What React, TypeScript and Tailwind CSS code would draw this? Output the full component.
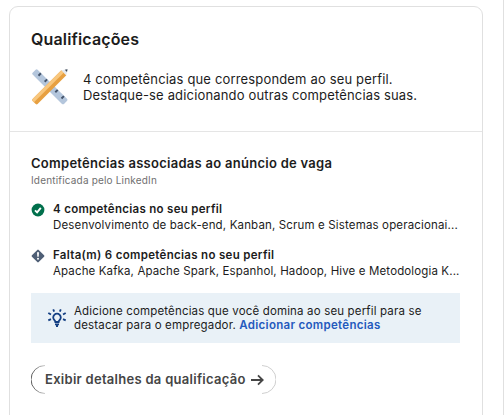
import type { ReactNode } from "react";

function PencilRuler() {
  return (
    <svg width="36" height="36" viewBox="0 0 36 36" className="shrink-0">
      <path d="M.6 5.600Q-.2 4.600.6 3.700L3.600.7Q4.600-.1 5.600.7L35 29.800Q35.900 30.800 35.100 31.700L32 34.900Q31 35.700 30 34.900z" fill="#b4c6dc" />
      <path d="M6.500 6.700l2.400-2.400M12.700 12.800l2.400-2.400M23.300 23.300l2.400-2.400M29.500 29.500l2.400-2.400" stroke="#44546b" strokeWidth="2" />
      <path d="M.6 30L29.300 1.300l5 5L5.600 35Q4.600 35.800 3.700 35L.6 31.900Q-.2 31 .6 30z" fill="#e7a041" />
      <path d="M.6 30L29.300 1.300l2.400 2.400L2 33.300l-1.400-1.400Q-.2 31 .6 30z" fill="#f8c77e" />
      <path d="M29.300 1.300L35.500.2 34.300 6.300z" fill="#e3e9f1" />
      <path d="M32.800.7l2.700-.5L35 2.900z" fill="#38434f" />
    </svg>
  );
}

function CheckIcon() {
  return (
    <svg width="14" height="14" viewBox="0 0 14 14">
      <circle cx="7" cy="7" r="6.400" fill="#01704c" />
      <path d="M4 7.300l2.100 2.100L9.800 4.800" fill="none" stroke="#fff" strokeWidth="1.900" />
    </svg>
  );
}

function MissingIcon() {
  return (
    <svg width="14" height="14" viewBox="0 0 14 14">
      <rect x="2.200" y="2.200" width="9.600" height="9.600" rx="1" fill="#4f5f76" transform="rotate(45 7 7)" />
      <path d="M6 3.200h2L7.700 7.800H6.300z" fill="#fff" />
      <circle cx="7" cy="9.700" r="1" fill="#fff" />
    </svg>
  );
}

function BulbIcon() {
  return (
    <svg width="20" height="20" viewBox="0 0 20 20" fill="none" stroke="#143f83" strokeWidth="1.800" className="shrink-0">
      <path d="M8.400 14c0-1.600-2.200-2.300-2.200-4.500a3.800 3.800 0 0 1 7.600 0c0 2.200-2.200 2.900-2.200 4.500z" />
      <path d="M8 16.400h4M9 18h2M7.200 3.700L6.200 1.300M12.800 3.700l1-2.400M4 6.500L1.300 4.900M16 6.500l2.700-1.600M4 11.100l-2.700 1.300M16 11.100l2.700 1.300" />
    </svg>
  );
}

function ButtonOutline() {
  return (
    <svg width="245" height="29" viewBox="0 0 245 29" fill="none" className="absolute inset-0">
      <path d="M14 .5A14 14 0 0 0 14 28.500" stroke="url(#edgeLeft)" />
      <path d="M231 .5A14 14 0 0 1 231 28.500" stroke="#cfcfcf" />
      <defs>
        <linearGradient id="edgeLeft" x1="0" y1="0" x2="14" y2="0" gradientUnits="userSpaceOnUse">
          <stop offset="0" stopColor="#555" />
          <stop offset="1" stopColor="#ccc" />
        </linearGradient>
      </defs>
    </svg>
  );
}

function SkillGroup({ icon, title, titleClass, skills, skillsClass }: { icon: ReactNode; title: string; titleClass: string; skills: string; skillsClass: string }) {
  return (
    <li className="flex gap-2">
      <span className="mt-[2px] shrink-0">{icon}</span>
      <div className="text-[11.5px] leading-4 whitespace-nowrap">
        <p className={`font-semibold ${titleClass}`}>{title}</p>
        <p className={skillsClass}>{skills}</p>
      </div>
    </li>
  );
}

export default function App() {
  return (
    <div className="flex h-[415px] w-[504px] justify-between overflow-hidden border-r border-[#e0e0e0] bg-white pt-[6px] pl-[9px] font-['Inter',sans-serif] text-[#1c1c1c]">
      <section className="h-[440px] w-[474px] shrink-0 rounded-[9px] border border-[#e0e0e0]">
        <header className="h-[125px] border-b border-[#e5e5e5] px-[21px] pt-[22px]">
          <h1 className="text-[16px] leading-5 font-semibold tracking-[0.15px]">Qualificações</h1>
          <div className="mt-[20px] flex items-center gap-[15px] pl-[1px]">
            <PencilRuler />
            <p className="text-[13px] leading-4 tracking-[0.16px] whitespace-nowrap">
              <span className="block">4 competências que correspondem ao seu perfil.</span>
              <span className="block">Destaque-se adicionando outras competências suas.</span>
            </p>
          </div>
        </header>
        <div className="px-[21px] pt-[23px]">
          <h2 className="text-[13px] leading-4 font-semibold tracking-[0.27px]">Competências associadas ao anúncio de vaga</h2>
          <p className="mt-[2px] text-[10px] leading-[14px] tracking-[0.18px] text-[#6f6f6f]">Identificada pelo LinkedIn</p>
          <ul className="mt-[14px] flex flex-col gap-[14px]">
            <SkillGroup
              icon={<CheckIcon />}
              title="4 competências no seu perfil"
              titleClass="tracking-[0.29px]"
              skills="Desenvolvimento de back-end, Kanban, Scrum e Sistemas operacionai..."
              skillsClass="tracking-[0.15px]"
            />
            <SkillGroup
              icon={<MissingIcon />}
              title="Falta(m) 6 competências no seu perfil"
              titleClass="tracking-[0.31px]"
              skills="Apache Kafka, Apache Spark, Espanhol, Hadoop, Hive e Metodologia K..."
              skillsClass="tracking-[0.13px]"
            />
          </ul>
          <aside className="mt-[14px] flex h-[50px] w-[429px] items-center gap-[7px] bg-[#e9f1f7] pl-[16px]">
            <BulbIcon />
            <p className="text-[11.5px] leading-[14px] tracking-[0.16px] whitespace-nowrap">
              <span className="block">Adicione competências que você domina ao seu perfil para se</span>
              <span className="block">
                destacar para o empregador. <a className="font-semibold tracking-[0.3px] text-[#2459bd]">Adicionar competências</a>
              </span>
            </p>
          </aside>
          <button className="relative mt-[22px] flex h-[29px] w-[245px] items-center gap-[5px] rounded-full pl-[14px] text-[13px] font-semibold tracking-[0.28px] whitespace-nowrap text-[#454545]">
            <ButtonOutline />
            <span>Exibir detalhes da qualificação</span>
            <svg width="13" height="12" viewBox="0 0 13 12" fill="none" stroke="currentColor" strokeWidth="1.800">
              <path d="M0 6h11.500M7 1.300L11.700 6 7 10.700" />
            </svg>
          </button>
        </div>
      </section>
    </div>
  );
}
